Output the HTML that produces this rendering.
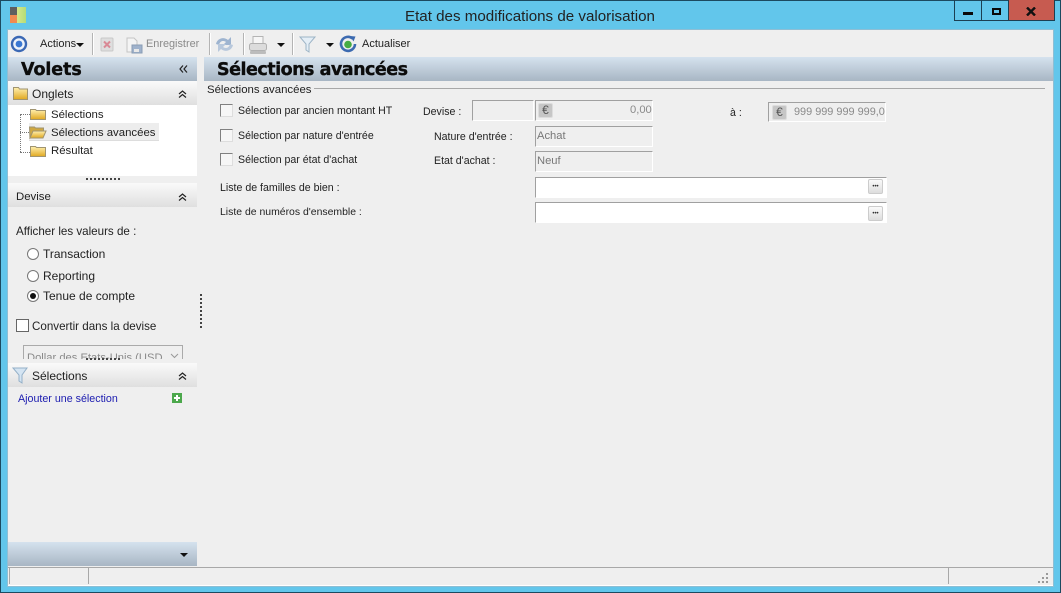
<!DOCTYPE html>
<html><head><meta charset="utf-8"><style>
html,body{margin:0;padding:0}
body{width:1061px;height:593px;overflow:hidden;position:relative;background:#62c6eb;font-family:"Liberation Sans",sans-serif;font-size:12px;color:#222}
.a{position:absolute}
.t{position:absolute;white-space:nowrap;line-height:14px}
.f{font-size:10.6px}
.tr{font-size:11.4px}
.hd{position:absolute;background:linear-gradient(#d5e2ee,#a8b6c4)}
.h1{position:absolute;white-space:nowrap;font-family:"DejaVu Sans",sans-serif;font-weight:bold;font-size:17.5px;line-height:22px;color:#0c0c0c;-webkit-text-stroke:.35px #0c0c0c}
.sec{position:absolute;left:8px;width:189px;background:linear-gradient(#fafafa,#dfdfdf)}
.cb{position:absolute;width:11px;height:11px;background:#f6f6f6;border:1px solid #808080;border-right-color:#ddd;border-bottom-color:#ddd}
.in{position:absolute;box-sizing:border-box;background:#efefef;border:1px solid #a0a0a0;border-right:1px solid #fff;border-bottom:1px solid #fff;color:#777;padding-left:1px;line-height:19px;font-size:11.2px}
.w{background:#fff}
.btn{position:absolute;width:15px;height:15px;background:linear-gradient(#fafafa,#ddd);border:1px solid #ccc;border-radius:2px;text-align:center;font-size:6px;line-height:14px;color:#333;box-sizing:border-box}
.eur{position:absolute;width:15px;height:15px;background:#c6c6c6;border:1px solid #ddd;border-radius:2px;box-sizing:border-box;text-align:center;font-size:12px;line-height:13px;color:#555}
.rad{position:absolute;width:10px;height:10px;border:1px solid #777;border-radius:50%;background:#fff}
.sep{position:absolute;top:33px;width:1px;height:22px;background:#b4b4b4;border-right:1px solid #fff}
.arr{position:absolute;width:0;height:0;border-left:4px solid transparent;border-right:4px solid transparent;border-top:4px solid #111}
.g{color:#8a8a8a}
</style></head><body>
<svg width="0" height="0" style="position:absolute"><defs>
<linearGradient id="fo" x1="0" y1="0" x2="0" y2="1"><stop offset="0" stop-color="#fff0b0"/><stop offset="1" stop-color="#e0a820"/></linearGradient>
</defs></svg>
<div class="a" style="left:0;top:0;width:1061px;height:593px;box-sizing:border-box;border:1px solid #1c4a60"></div>
<!-- title bar -->
<div class="a" style="left:10px;top:7px;width:7px;height:8px;background:#5f5f5f"></div>
<div class="a" style="left:10px;top:15px;width:7px;height:8px;background:#f08a50"></div>
<div class="a" style="left:17px;top:7px;width:9px;height:16px;background:linear-gradient(90deg,#d6e88a,#b4dc78)"></div>
<div class="t" style="left:405px;top:8px;font-size:15.15px;line-height:17px;color:#222">Etat des modifications de valorisation</div>
<div class="a" style="left:954px;top:0;width:28px;height:21px;box-sizing:border-box;border:1px solid #1c3f52;border-top:0"><div class="a" style="left:8px;top:12px;width:10px;height:3px;background:#0a0a0a"></div></div>
<div class="a" style="left:982px;top:0;width:27px;height:21px;box-sizing:border-box;border:1px solid #1c3f52;border-top:0;border-left:0"><div class="a" style="left:10px;top:8px;width:9px;height:7px;box-sizing:border-box;border:2px solid #0a0a0a"></div></div>
<div class="a" style="left:1009px;top:0;width:46px;height:21px;box-sizing:border-box;background:#c75b50;border:1px solid #1c3f52;border-top:0;border-left:0">
<svg class="a" style="left:17px;top:7px" width="11" height="9"><path d="M1 0.500l8 8M9 0.500l-8 8" stroke="#111" stroke-width="2.400"/></svg></div>
<!-- client -->
<div class="a" style="left:8px;top:30px;width:1045px;height:556px;background:#efefef;box-shadow:0 0 0 1px #8ebed4"></div>
<!-- toolbar -->
<svg class="a" style="left:10px;top:35px" width="18" height="18"><circle cx="9" cy="9" r="7" fill="#eef3fa" stroke="#3b68b4" stroke-width="2.400"/><circle cx="9" cy="9" r="3.400" fill="#3b78d2"/></svg>
<div class="t" style="left:40px;top:37px;font-size:11px">Actions</div>
<div class="arr" style="left:76px;top:43px"></div>
<div class="sep" style="left:92px"></div>
<svg class="a" style="left:100px;top:37px" width="14" height="15"><rect x="1" y="1" width="12" height="13" rx="1" fill="#dedede" stroke="#c8c8c8"/><path d="M4 4.500l6 6M10 4.500l-6 6" stroke="#d98a96" stroke-width="2"/></svg>
<svg class="a" style="left:125px;top:36px" width="18" height="18"><path d="M2 2h7l3 3v11H2z" fill="#f4f4f4" stroke="#c4c4c4"/><rect x="7" y="9" width="10" height="8" fill="#9fb2cc" stroke="#8a9cb4"/><rect x="9" y="13" width="5" height="3" fill="#e8e8e8"/></svg>
<div class="t g" style="left:146px;top:37px;font-size:10.9px">Enregistrer</div>
<div class="sep" style="left:209px"></div>
<svg class="a" style="left:215px;top:35px" width="19" height="19"><path d="M1 9c1-5 7-8 12-4l3-3v8H8l3-3C8 5 5 6 4 10z" fill="#9eb4d0"/><path d="M18 10c-1 5-7 8-12 4l-3 3V9h8l-3 3c3 2 6 1 7-3z" fill="#b8c8dc"/></svg>
<div class="sep" style="left:243px"></div>
<svg class="a" style="left:249px;top:35px" width="18" height="20"><rect x="4" y="1.500" width="10" height="8" fill="#f6f6f6" stroke="#b4b4b4"/><rect x="0.500" y="8.500" width="17" height="7" rx="2" fill="#dcdcdc" stroke="#b0b0b0"/><rect x="1" y="16" width="16" height="3" rx="1" fill="#bcbcbc"/></svg>
<div class="arr" style="left:277px;top:43px"></div>
<div class="sep" style="left:292px"></div>
<svg class="a" style="left:299px;top:35px" width="17" height="18"><path d="M1 2h15L10 9v8l-3-2V9z" fill="#e4eef6" stroke="#9db4c6"/></svg>
<div class="arr" style="left:326px;top:43px"></div>
<svg class="a" style="left:339px;top:35px" width="18" height="18"><path d="M13.500 3.500A7 7 0 1 0 16 9" fill="none" stroke="#3c6ab0" stroke-width="2.600"/><path d="M11 1l5.500 .5-2 5z" fill="#3c6ab0"/><circle cx="9" cy="9.500" r="3.800" fill="#46ac44"/></svg>
<div class="t" style="left:362px;top:37px;font-size:11px">Actualiser</div>
<!-- left panel -->
<div class="hd" style="left:8px;top:57px;width:189px;height:24px"></div>
<div class="h1" style="left:21px;top:59px;letter-spacing:-.1px">Volets</div>
<svg class="a" style="left:179px;top:65px" width="9" height="8"><path d="M4 .5L1 4l3 3.500M8 .5L5 4l3 3.500" fill="none" stroke="#222" stroke-width="1.200"/></svg>
<div class="a" style="left:8px;top:81px;width:189px;height:95px;background:#fff"></div>
<div class="sec" style="top:81px;height:24px"></div>
<svg class="a" style="left:13px;top:86px" width="15" height="14"><path d="M.500 1.500h5l1 1.500h8v10.500H.500z" fill="url(#fo)" stroke="#a09470"/></svg>
<div class="t" style="left:32px;top:87px">Onglets</div>
<svg class="a" style="left:178px;top:90px" width="9" height="8"><path d="M1 4l3.500-3L8 4M1 7.500l3.500-3 3.500 3" fill="none" stroke="#222" stroke-width="1.200"/></svg>
<div class="a" style="left:20px;top:114px;width:0;height:38px;border-left:1px dotted #777"></div>
<div class="a" style="left:20px;top:114px;width:10px;border-top:1px dotted #777"></div>
<div class="a" style="left:20px;top:132px;width:9px;border-top:1px dotted #777"></div>
<div class="a" style="left:20px;top:152px;width:10px;border-top:1px dotted #777"></div>
<svg class="a" style="left:30px;top:108px" width="16" height="12"><path d="M.500 1.500h5l1 1h9v9H.500z" fill="url(#fo)" stroke="#a09470"/></svg>
<div class="t tr" style="left:51px;top:108px">Sélections</div>
<div class="a" style="left:29px;top:123px;width:130px;height:17px;background:#ededed;border-bottom:1px solid #ddd"></div>
<svg class="a" style="left:29px;top:126px" width="18" height="13"><path d="M.500 1h5l1 1h8v3H5l-4 7z" fill="#d0a840" stroke="#a09470"/><path d="M4 5h13l-3 7H1z" fill="url(#fo)" stroke="#a09470"/></svg>
<div class="t tr" style="left:51px;top:126px">Sélections avancées</div>
<svg class="a" style="left:30px;top:145px" width="16" height="12"><path d="M.500 1.500h5l1 1h9v9H.500z" fill="url(#fo)" stroke="#a09470"/></svg>
<div class="t tr" style="left:51px;top:144px">Résultat</div>
<div class="a" style="left:86px;top:178px;width:34px;border-top:2px dotted #444"></div>
<div class="sec" style="top:183px;height:24px"></div>
<div class="t tr" style="left:16px;top:190px">Devise</div>
<svg class="a" style="left:178px;top:193px" width="9" height="8"><path d="M1 4l3.500-3L8 4M1 7.500l3.500-3 3.500 3" fill="none" stroke="#222" stroke-width="1.200"/></svg>
<div class="t" style="left:16px;top:225px;font-size:11.6px">Afficher les valeurs de :</div>
<div class="rad" style="left:27px;top:248px"></div><div class="t" style="left:43px;top:247px">Transaction</div>
<div class="rad" style="left:27px;top:270px"></div><div class="t" style="left:43px;top:269px">Reporting</div>
<div class="rad" style="left:27px;top:290px"></div><div class="a" style="left:30px;top:293px;width:6px;height:6px;border-radius:50%;background:#111"></div><div class="t" style="left:43px;top:289px">Tenue de compte</div>
<div class="a" style="left:200px;top:294px;height:34px;border-left:2px dotted #444"></div>
<div class="a" style="left:16px;top:319px;width:11px;height:11px;background:#fff;border:1px solid #666"></div>
<div class="t" style="left:32px;top:320px;font-size:11.6px">Convertir dans la devise</div>
<div class="a" style="left:23px;top:345px;width:160px;height:14px;box-sizing:border-box;border:1px solid #aaa;border-bottom:0;background:#efefef;overflow:hidden"><div class="t g" style="left:3px;top:5px;font-size:11.2px">Dollar des Etats-Unis (USD</div><svg class="a" style="left:146px;top:7px" width="9" height="6"><path d="M1 1l3.500 3.500L8 1" fill="none" stroke="#999"/></svg></div>
<div class="a" style="left:8px;top:359px;width:189px;height:4px;background:#efefef"></div>
<div class="sec" style="top:363px;height:24px"></div>
<div class="a" style="left:86px;top:358px;width:34px;border-top:2px dotted #444"></div>
<svg class="a" style="left:12px;top:367px" width="16" height="17"><path d="M1 1h14L10 8v8l-3-2V8z" fill="#d4e4f2" stroke="#94b0c8"/></svg>
<div class="t" style="left:32px;top:369px">Sélections</div>
<svg class="a" style="left:178px;top:372px" width="9" height="8"><path d="M1 4l3.500-3L8 4M1 7.500l3.500-3 3.500 3" fill="none" stroke="#222" stroke-width="1.200"/></svg>
<div class="t" style="left:18px;top:392px;color:#1c1cb0;font-size:10.7px">Ajouter une sélection</div>
<div class="a" style="left:172px;top:393px;width:10px;height:10px;background:#4ca84c"></div>
<div class="a" style="left:174px;top:397px;width:6px;height:2px;background:#fff"></div>
<div class="a" style="left:176px;top:395px;width:2px;height:6px;background:#fff"></div>
<div class="hd" style="left:8px;top:542px;width:189px;height:24px"></div>
<div class="arr" style="left:180px;top:553px"></div>
<!-- right header -->
<div class="hd" style="left:204px;top:57px;width:849px;height:24px"></div>
<div class="h1" style="left:217px;top:59px;letter-spacing:-.5px">Sélections avancées</div>
<!-- form -->
<div class="a" style="left:314px;top:88px;width:731px;height:1px;background:#a8a8a8"></div>
<div class="t tr" style="left:207px;top:83px">Sélections avancées</div>
<div class="cb" style="left:220px;top:104px"></div><div class="t f" style="left:238px;top:104px">Sélection par ancien montant HT</div>
<div class="cb" style="left:220px;top:129px"></div><div class="t f" style="left:238px;top:129px">Sélection par nature d'entrée</div>
<div class="cb" style="left:220px;top:153px"></div><div class="t f" style="left:238px;top:153px">Sélection par état d'achat</div>
<div class="t f" style="left:423px;top:105px">Devise :</div>
<div class="t f" style="left:434px;top:130px">Nature d'entrée :</div>
<div class="t f" style="left:434px;top:154px">Etat d'achat :</div>
<div class="t f" style="left:220px;top:181px">Liste de familles de bien :</div>
<div class="t" style="left:220px;top:206px;font-size:10.45px">Liste de numéros d'ensemble :</div>
<div class="in" style="left:472px;top:100px;width:62px;height:21px"></div>
<div class="in" style="left:535px;top:100px;width:118px;height:21px"></div>
<div class="eur" style="left:538px;top:103px">€</div>
<div class="t g" style="left:630px;top:103px;font-size:11.2px">0,00</div>
<div class="t f" style="left:730px;top:106px">à :</div>
<div class="in" style="left:768px;top:102px;width:118px;height:20px"></div>
<div class="eur" style="left:772px;top:105px">€</div>
<div class="t g" style="left:794px;top:105px;font-size:10.9px">999 999 999 999,0</div>
<div class="in" style="left:535px;top:126px;width:118px;height:21px">Achat</div>
<div class="in" style="left:535px;top:151px;width:118px;height:21px">Neuf</div>
<div class="in w" style="left:535px;top:177px;width:352px;height:21px"></div>
<div class="btn" style="left:868px;top:179px">•••</div>
<div class="in w" style="left:535px;top:202px;width:352px;height:21px"></div>
<div class="btn" style="left:868px;top:206px">•••</div>
<!-- status -->
<div class="a" style="left:8px;top:567px;width:1045px;height:19px;box-sizing:border-box;border-top:1px solid #a8a8a8;border-bottom:1px solid #fff;background:#efefef"></div>
<div class="a" style="left:9px;top:568px;width:1px;height:16px;background:#a8a8a8"></div>
<div class="a" style="left:88px;top:568px;width:1px;height:16px;background:#a8a8a8"></div>
<div class="a" style="left:948px;top:568px;width:1px;height:16px;background:#a8a8a8"></div>
<svg class="a" style="left:1037px;top:572px" width="14" height="12" fill="#999"><rect x="9" y="1" width="2" height="2"/><rect x="5" y="5" width="2" height="2"/><rect x="9" y="5" width="2" height="2"/><rect x="1" y="9" width="2" height="2"/><rect x="5" y="9" width="2" height="2"/><rect x="9" y="9" width="2" height="2"/></svg>
</body></html>
